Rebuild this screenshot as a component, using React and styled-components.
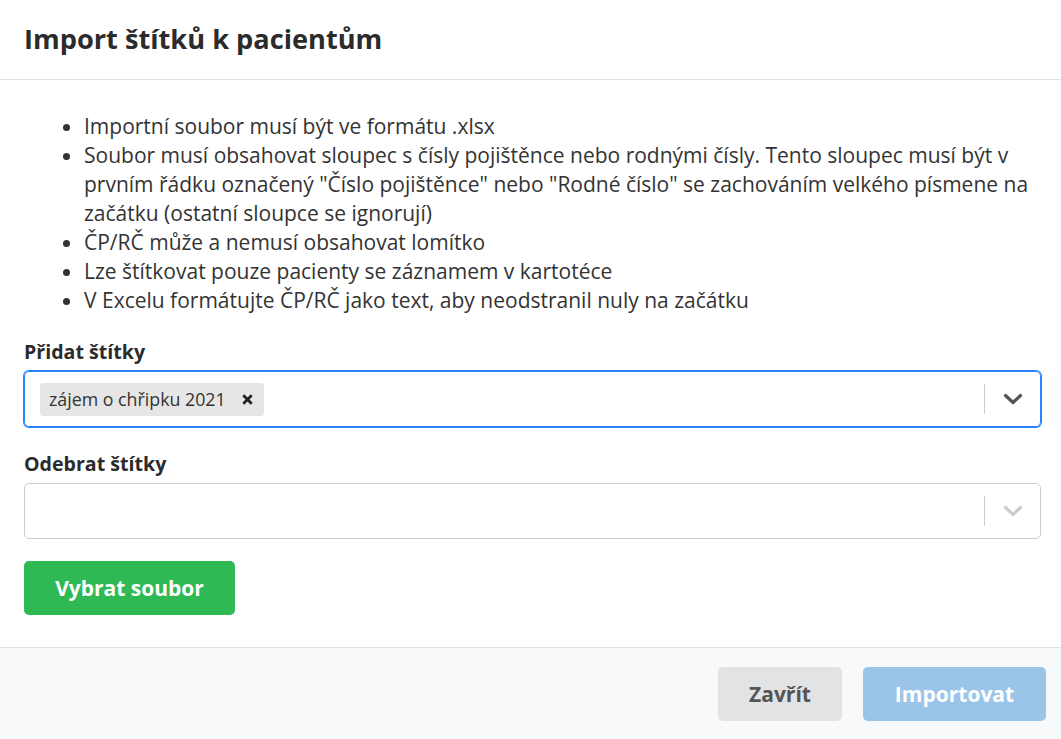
import React from "react";
import styled, { createGlobalStyle } from "styled-components";

const GlobalStyle = createGlobalStyle`
  html, body {
    margin: 0;
    padding: 0;
    background: #fff;
    font-family: "Open Sans", "Liberation Sans", sans-serif;
    color: #333;
  }
`;

const Modal = styled.div`
  width: 1061px;
  height: 739px;
  display: flex;
  flex-direction: column;
  background: #fff;
`;

const Header = styled.div`
  height: 80px;
  box-sizing: border-box;
  border-bottom: 1px solid #dee2e6;
  display: flex;
  align-items: center;
  padding: 0 24px 2px;
`;

const Title = styled.h1`
  margin: 0;
  font-size: 27.2px;
  font-weight: 700;
  color: #2b2b2b;
`;

const Body = styled.div`
  flex: 1;
  padding: 32px 20px 32px 24px;
`;

const Rules = styled.ul`
  margin: 0 0 25px;
  padding-left: 60px;
  font-size: 21px;
  line-height: 29px;
  color: #333;
`;

const Label = styled.div`
  font-size: 19.6px;
  font-weight: 700;
  line-height: 24px;
  color: #2b2b2b;
  margin-bottom: 7px;
`;

const Select = styled.div`
  height: 56px;
  box-sizing: border-box;
  border-radius: 5px;
  border: 1px solid ${(p) => (p.$focused ? "#2684ff" : "#ccc")};
  box-shadow: ${(p) => (p.$focused ? "0 0 0 1px #2684ff" : "none")};
  padding-left: 15px;
  display: flex;
  align-items: center;
  margin-bottom: ${(p) => p.$mb || 0}px;
`;

const Values = styled.div`
  flex: 1;
  display: flex;
  align-items: center;
`;

const Chip = styled.div`
  display: flex;
  align-items: center;
  height: 33px;
  background: #e6e6e6;
  border-radius: 3px;
  padding: 0 11px 0 9px;
  font-size: 17.8px;
  color: #333;
`;

const ChipRemove = styled.span`
  margin-left: 16px;
  display: flex;
  align-items: center;
`;

const Indicators = styled.div`
  display: flex;
  align-items: center;
  height: 100%;
`;

const Separator = styled.span`
  width: 1px;
  height: 30px;
  background: #ccc;
`;

const Chevron = styled.div`
  width: 55px;
  display: flex;
  justify-content: center;
  align-items: center;
  color: ${(p) => (p.$active ? "#555" : "#ccc")};
`;

const PrimaryButton = styled.button`
  margin-top: 22px;
  height: 54px;
  width: 211px;
  border: none;
  border-radius: 5px;
  background: #2fb954;
  color: #fff;
  font-family: "Open Sans", "Liberation Sans", sans-serif;
  font-size: 21px;
  font-weight: 700;
`;

const Footer = styled.div`
  height: 92px;
  box-sizing: border-box;
  border-top: 1px solid #dee2e6;
  background: #f8f9fa;
  display: flex;
  justify-content: flex-end;
  align-items: center;
  gap: 21px;
  padding: 1px 15px 0;
`;

const FooterButton = styled.button`
  height: 54px;
  width: ${(p) => p.$w}px;
  border: none;
  border-radius: 5px;
  background: ${(p) => (p.$primary ? "#9bc5e8" : "#e2e3e5")};
  color: ${(p) => (p.$primary ? "#fff" : "#555")};
  font-family: "Open Sans", "Liberation Sans", sans-serif;
  font-size: 21px;
  font-weight: 700;
`;

const ChevronIcon = () => (
  <svg width="20" height="12" viewBox="0 0 20 12" fill="none">
    <path d="M2.5 2.5 L10 9.5 L17.5 2.5" stroke="currentColor" strokeWidth="3.2" strokeLinecap="round" strokeLinejoin="round" />
  </svg>
);

const CrossIcon = () => (
  <svg width="11" height="11" viewBox="0 0 11 11">
    <path d="M1.3 1.3 L9.7 9.7 M9.7 1.3 L1.3 9.7" stroke="#1e1e1e" strokeWidth="2.7" strokeLinecap="butt" />
  </svg>
);

export default function App() {
  return (
    <>
      <GlobalStyle />
      <Modal>
        <Header>
          <Title>Import štítků k pacientům</Title>
        </Header>
        <Body>
          <Rules>
            <li>Importní soubor musí být ve formátu .xlsx</li>
            <li>
              Soubor musí obsahovat sloupec s čísly pojištěnce nebo rodnými čísly. Tento sloupec musí být v
              prvním řádku označený "Číslo pojištěnce" nebo "Rodné číslo" se zachováním velkého písmene na
              začátku (ostatní sloupce se ignorují)
            </li>
            <li>ČP/RČ může a nemusí obsahovat lomítko</li>
            <li>Lze štítkovat pouze pacienty se záznamem v kartotéce</li>
            <li>V Excelu formátujte ČP/RČ jako text, aby neodstranil nuly na začátku</li>
          </Rules>
          <Label>Přidat štítky</Label>
          <Select $focused $mb={25}>
            <Values>
              <Chip>
                zájem o chřipku 2021
                <ChipRemove>
                  <CrossIcon />
                </ChipRemove>
              </Chip>
            </Values>
            <Indicators>
              <Separator />
              <Chevron $active>
                <ChevronIcon />
              </Chevron>
            </Indicators>
          </Select>
          <Label>Odebrat štítky</Label>
          <Select>
            <Values />
            <Indicators>
              <Separator />
              <Chevron>
                <ChevronIcon />
              </Chevron>
            </Indicators>
          </Select>
          <PrimaryButton>Vybrat soubor</PrimaryButton>
        </Body>
        <Footer>
          <FooterButton $w={124}>Zavřít</FooterButton>
          <FooterButton $w={183} $primary>
            Importovat
          </FooterButton>
        </Footer>
      </Modal>
    </>
  );
}
